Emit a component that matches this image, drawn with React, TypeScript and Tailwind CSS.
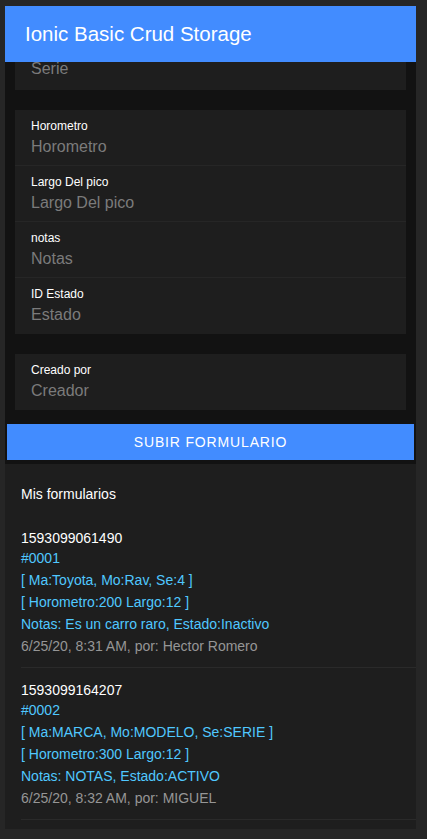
import React from 'react'

const FONT = { fontFamily: '"Liberation Sans", Arial, sans-serif' }

type Field = { label: string; placeholder: string }

const MAIN_FIELDS: Field[] = [
  { label: 'Horometro', placeholder: 'Horometro' },
  { label: 'Largo Del pico', placeholder: 'Largo Del pico' },
  { label: 'notas', placeholder: 'Notas' },
  { label: 'ID Estado', placeholder: 'Estado' },
]

const RECORDS = [
  {
    id: '1593099061490',
    code: '#0001',
    lines: ['[ Ma:Toyota, Mo:Rav, Se:4 ]', '[ Horometro:200 Largo:12 ]', 'Notas: Es un carro raro, Estado:Inactivo'],
    meta: '6/25/20, 8:31 AM, por: Hector Romero',
  },
  {
    id: '1593099164207',
    code: '#0002',
    lines: ['[ Ma:MARCA, Mo:MODELO, Se:SERIE ]', '[ Horometro:300 Largo:12 ]', 'Notas: NOTAS, Estado:ACTIVO'],
    meta: '6/25/20, 8:32 AM, por: MIGUEL',
  },
]

function FieldRow({ field, last }: { field: Field; last?: boolean }) {
  return (
    <div className={last ? 'h-[56px] pl-[16px] pt-[9px]' : 'h-[56px] pl-[16px] pt-[9px] border-b border-[#262626]'}>
      <div className="text-[12px] leading-[14px] text-white">{field.label}</div>
      <div className="mt-[4px] text-[16px] leading-[20px] text-[#7b7b7b]">{field.placeholder}</div>
    </div>
  )
}

export default function App() {
  return (
    <div className="min-h-screen bg-[#262626] pl-[5px] pt-[6px] pb-[10px]" style={FONT}>
      <div className="w-[411px] flex flex-col">
        <header className="h-[56px] bg-[#428cff] pl-[20px] flex items-center text-[20.5px] text-white">
          Ionic Basic Crud Storage
        </header>

        <div className="bg-[#121212] px-[10px] pb-[4px]">
          {/* card scrolled under the toolbar, only its value still shows */}
          <div className="h-[28px] bg-[#1e1e1e] pl-[16px]">
            <div className="text-[16px] leading-[14px] text-[#7b7b7b]">Serie</div>
          </div>

          <div className="mt-[20px] bg-[#1e1e1e]">
            {MAIN_FIELDS.map((f, i) => (
              <FieldRow key={f.label} field={f} last={i === MAIN_FIELDS.length - 1} />
            ))}
          </div>

          <div className="mt-[20px] bg-[#1e1e1e]">
            <FieldRow field={{ label: 'Creado por', placeholder: 'Creador' }} last />
          </div>

          <button className="mt-[14px] -mx-[8px] w-[407px] h-[36px] bg-[#428cff] text-white text-[14px] font-medium uppercase tracking-[0.84px] flex items-center justify-center">
            Subir formulario
          </button>
        </div>

        <section className="bg-[#1e1e1e] pt-[20px] pb-[9px]">
          <div className="pl-[16px] text-[14px] leading-[20px] text-white">Mis formularios</div>
          <div className="mt-[12px]">
            {RECORDS.map((r) => (
              <div key={r.id} className="ml-[16px] h-[152px] pt-[12px] border-b border-[#2a2a2a] text-[14px] leading-[20px]">
                <div className="text-white">{r.id}</div>
                <div className="text-[#50c8ff]">{r.code}</div>
                {r.lines.map((l) => (
                  <div key={l} className="mt-[2px] text-[#50c8ff]">
                    {l}
                  </div>
                ))}
                <div className="mt-[2px] text-[#969696]">{r.meta}</div>
              </div>
            ))}
          </div>
        </section>
      </div>
    </div>
  )
}
